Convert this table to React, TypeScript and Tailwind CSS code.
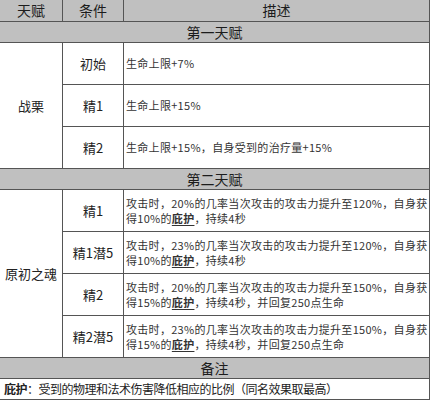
const font = "font-['Noto_Sans_CJK_SC','Noto_Sans',sans-serif]";

type Row = { cond: string; lines: React.ReactNode[] };

const Shield = () => <span className="font-bold underline underline-offset-2">庇护</span>;

const first: Row[] = [
  { cond: "初始", lines: ["生命上限+7%"] },
  { cond: "精1", lines: ["生命上限+15%"] },
  { cond: "精2", lines: ["生命上限+15%，自身受到的治疗量+15%"] },
];

const second: Row[] = [
  {
    cond: "精1",
    lines: [
      "攻击时，20%的几率当次攻击的攻击力提升至120%，自身获",
      <>得10%的<Shield />，持续4秒</>,
    ],
  },
  {
    cond: "精1潜5",
    lines: [
      "攻击时，23%的几率当次攻击的攻击力提升至120%，自身获",
      <>得10%的<Shield />，持续4秒</>,
    ],
  },
  {
    cond: "精2",
    lines: [
      "攻击时，20%的几率当次攻击的攻击力提升至150%，自身获",
      <>得15%的<Shield />，持续4秒，并回复250点生命</>,
    ],
  },
  {
    cond: "精2潜5",
    lines: [
      "攻击时，23%的几率当次攻击的攻击力提升至150%，自身获",
      <>得15%的<Shield />，持续4秒，并回复250点生命</>,
    ],
  },
];

function Section({ title }: { title: string }) {
  return (
    <div className="col-span-3 h-[20px] bg-[#c0c0c0] flex items-center justify-center text-[14px] text-[#1c1c1c]">
      {title}
    </div>
  );
}

function Group({ name, rows }: { name: string; rows: Row[] }) {
  const span = rows.length === 3 ? "row-span-3" : "row-span-4";
  return (
    <>
      <div className={`${span} bg-white flex items-center justify-center text-[13px] text-[#222]`}>
        {name}
      </div>
      {rows.map((r) => (
        <div key={r.cond} className="contents">
          <div className="h-[41px] bg-white flex items-center justify-center text-[13px] text-[#222]">
            {r.cond}
          </div>
          <div className="h-[41px] bg-white flex flex-col justify-center pl-[2px] text-[11px] tracking-[0.3px] leading-[15px] text-[#333] whitespace-nowrap overflow-hidden">
            {r.lines.map((l, i) => (
              <div key={i}>{l}</div>
            ))}
          </div>
        </div>
      ))}
    </>
  );
}

export default function App() {
  return (
    <div className={`w-[431px] h-[400px] bg-white ${font}`}>
      <div className="w-[430px] grid grid-cols-[62px_60px_305px] gap-px bg-[#555] pr-px pb-px">
        {/* header */}
        <div className="h-[21px] bg-[#c0c0c0] flex items-center justify-center text-[14px] text-[#1c1c1c]">天赋</div>
        <div className="h-[21px] bg-[#c0c0c0] flex items-center justify-center text-[14px] text-[#1c1c1c]">条件</div>
        <div className="h-[21px] bg-[#c0c0c0] flex items-center justify-center text-[14px] text-[#1c1c1c]">描述</div>

        <Section title="第一天赋" />
        <Group name="战栗" rows={first} />

        <Section title="第二天赋" />
        <Group name="原初之魂" rows={second} />

        <Section title="备注" />
        <div className="col-span-3 h-[20px] bg-white flex items-center pl-1 text-[12px] tracking-[-0.5px] text-[#222] whitespace-nowrap">
          <span className="font-bold">庇护</span>：受到的物理和法术伤害降低相应的比例（同名效果取最高）
        </div>
      </div>
    </div>
  );
}
